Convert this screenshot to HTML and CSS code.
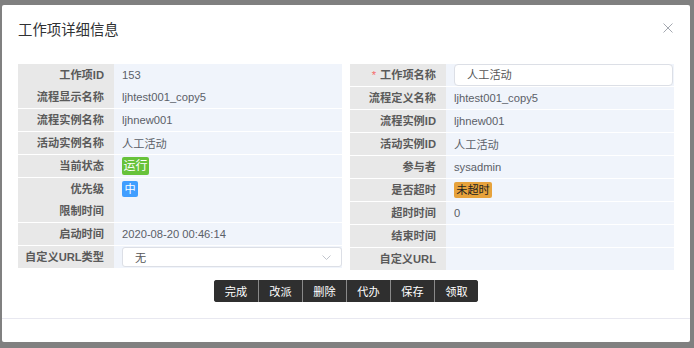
FILE: index.html
```html
<!DOCTYPE html>
<html lang="zh">
<head>
<meta charset="utf-8">
<title>工作项详细信息</title>
<link rel="stylesheet" href="styles.css">
</head>
<body>
<div class="dialog">
  <div class="dialog-header">
    <span class="title">工作项详细信息</span>
    <span class="close"><svg width="10" height="10" viewBox="0 0 10 10"><path d="M0.5 0.5L9.5 9.5M9.5 0.5L0.5 9.5" stroke="#a4a8b0" stroke-width="1" fill="none"/></svg></span>
  </div>
  <div class="dialog-body">
    <div class="grid">
      <div class="col">
        <div class="row"><div class="lbl">工作项ID</div><div class="val">153</div></div>
        <div class="row"><div class="lbl">流程显示名称</div><div class="val">ljhtest001_copy5</div></div>
        <div class="row gap"><div class="lbl">流程实例名称</div><div class="val">ljhnew001</div></div>
        <div class="row gap"><div class="lbl">活动实例名称</div><div class="val">人工活动</div></div>
        <div class="row gap"><div class="lbl">当前状态</div><div class="val"><span class="tag tag-green">运行</span></div></div>
        <div class="row gap"><div class="lbl">优先级</div><div class="val"><span class="tag tag-blue">中</span></div></div>
        <div class="row"><div class="lbl">限制时间</div><div class="val"></div></div>
        <div class="row gap"><div class="lbl">启动时间</div><div class="val">2020-08-20 00:46:14</div></div>
        <div class="row gap"><div class="lbl">自定义URL类型</div><div class="val"><div class="select"><span>无</span><svg width="9" height="5" viewBox="0 0 9 5"><path d="M0.5 0.5L4.5 4.5L8.5 0.5" stroke="#c0c4cc" stroke-width="1" fill="none"/></svg></div></div></div>
      </div>
      <div class="col">
        <div class="row"><div class="lbl"><span class="req">*</span>工作项名称</div><div class="val"><div class="input">人工活动</div></div></div>
        <div class="row gap"><div class="lbl">流程定义名称</div><div class="val">ljhtest001_copy5</div></div>
        <div class="row gap"><div class="lbl">流程实例ID</div><div class="val">ljhnew001</div></div>
        <div class="row gap"><div class="lbl">活动实例ID</div><div class="val">人工活动</div></div>
        <div class="row gap"><div class="lbl">参与者</div><div class="val">sysadmin</div></div>
        <div class="row gap"><div class="lbl">是否超时</div><div class="val"><span class="tag tag-orange">未超时</span></div></div>
        <div class="row gap"><div class="lbl">超时时间</div><div class="val">0</div></div>
        <div class="row gap"><div class="lbl">结束时间</div><div class="val"></div></div>
        <div class="row gap"><div class="lbl">自定义URL</div><div class="val"></div></div>
      </div>
    </div>
    <div class="actions">
      <div class="btn-group">
        <button class="btn">完成</button>
        <button class="btn">改派</button>
        <button class="btn">删除</button>
        <button class="btn">代办</button>
        <button class="btn">保存</button>
        <button class="btn">领取</button>
      </div>
    </div>
  </div>
  <div class="dialog-footer"></div>
</div>
</body>
</html>
```
FILE: styles.css
```css
* { box-sizing: border-box; }
body {
  margin: 0;
  background: #808080;
  font-family: "Liberation Sans", "Noto Sans CJK SC", sans-serif;
}
.dialog {
  margin: 5px 4px 0 2px;
  height: 337px;
  background: #fff;
  border-radius: 2px;
  display: flex;
  flex-direction: column;
}
.dialog-header {
  height: 59px;
  padding: 15px 17px 0 16px;
  display: flex;
  justify-content: space-between;
  align-items: flex-start;
}
.title {
  font-size: 14.4px;
  line-height: 20px;
  color: #303133;
}
.close {
  display: flex;
  margin-top: 3px;
}
.grid {
  display: flex;
  gap: 8px;
  padding: 0 16px;
}
.col {
  flex: 1;
  display: flex;
  flex-direction: column;
}
.row {
  display: flex;
  height: 22px;
}
.row.gap { margin-top: 1px; }
.lbl {
  width: 96px;
  flex: none;
  background: #e8e8e8;
  text-align: right;
  padding-right: 10px;
  font-size: 11.2px;
  line-height: 22px;
  font-weight: bold;
  color: #5a5a5a;
  white-space: nowrap;
}
.req {
  color: #f56c6c;
  font-weight: normal;
  margin-right: 4px;
}
.val {
  flex: 1;
  background: #f0f4fb;
  padding-left: 8px;
  font-size: 11.2px;
  color: #5b6068;
  display: flex;
  align-items: center;
  white-space: nowrap;
}
.tag {
  display: inline-block;
  font-size: 11.2px;
  border-radius: 2px;
  text-align: center;
}
.tag-green {
  background: #67c23a;
  color: #fff;
  width: 27px;
  height: 18px;
  line-height: 18px;
  font-size: 12px;
}
.tag-blue {
  background: #409eff;
  color: #fff;
  width: 16px;
  height: 16px;
  line-height: 16px;
}
.tag-orange {
  background: #e6a23c;
  color: #222;
  width: 38px;
  height: 16px;
  line-height: 16px;
}
.input {
  flex: 1;
  height: 22px;
  margin-right: 1px;
  border: 1px solid #dcdfe6;
  border-radius: 4px;
  background: #fff;
  padding-left: 12px;
  line-height: 20px;
  font-size: 11.2px;
  color: #555;
}
.select {
  flex: 1;
  height: 20px;
  border: 1px solid #dcdfe6;
  border-radius: 3px;
  background: #fff;
  padding: 0 10px 0 12px;
  display: flex;
  align-items: center;
  justify-content: space-between;
  font-size: 11.2px;
  color: #555;
}
.actions {
  display: flex;
  justify-content: center;
  margin-top: 10px;
}
.btn-group {
  display: flex;
  background: #2f2f2f;
  border-radius: 3px;
  overflow: hidden;
}
.btn {
  width: 44px;
  height: 22px;
  border: none;
  background: #2f2f2f;
  color: #fff;
  font-family: "Liberation Sans", "Noto Sans CJK SC", sans-serif;
  font-size: 11.2px;
  padding: 0;
}
.btn + .btn { border-left: 1px solid #8a8a8a; }
.dialog-footer {
  flex: 1;
  margin-top: 16px;
  border-top: 1px solid #e8e8f0;
}
```
